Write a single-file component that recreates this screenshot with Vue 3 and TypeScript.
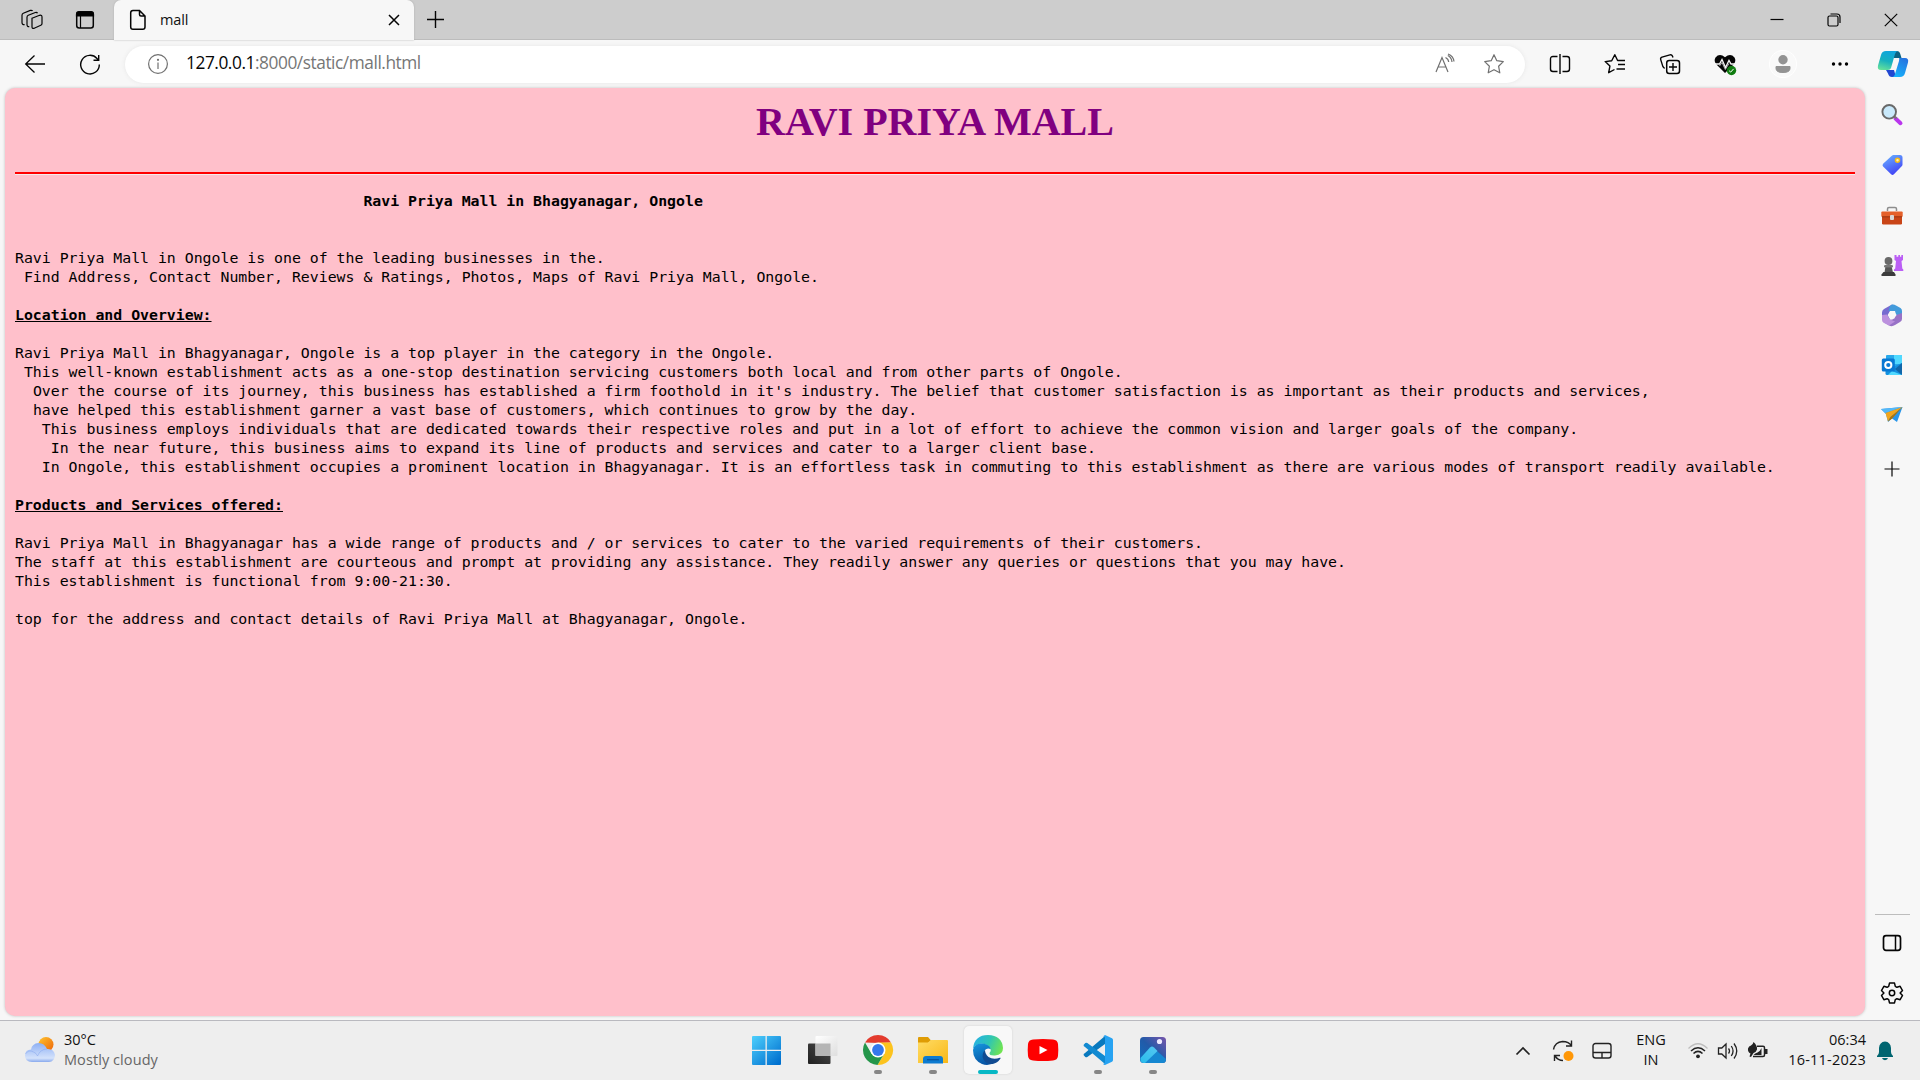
<script setup lang="ts">
interface TextLine {
  indent: number
  text: string
  kind?: 'title' | 'heading'
}

const lines: TextLine[] = [
  { indent: 39, text: 'Ravi Priya Mall in Bhagyanagar, Ongole', kind: 'title' },
  { indent: 0, text: '' },
  { indent: 0, text: '' },
  { indent: 0, text: 'Ravi Priya Mall in Ongole is one of the leading businesses in the.' },
  { indent: 1, text: 'Find Address, Contact Number, Reviews & Ratings, Photos, Maps of Ravi Priya Mall, Ongole.' },
  { indent: 0, text: '' },
  { indent: 0, text: 'Location and Overview:', kind: 'heading' },
  { indent: 0, text: '' },
  { indent: 0, text: 'Ravi Priya Mall in Bhagyanagar, Ongole is a top player in the category in the Ongole.' },
  { indent: 1, text: 'This well-known establishment acts as a one-stop destination servicing customers both local and from other parts of Ongole.' },
  { indent: 2, text: "Over the course of its journey, this business has established a firm foothold in it's industry. The belief that customer satisfaction is as important as their products and services," },
  { indent: 2, text: 'have helped this establishment garner a vast base of customers, which continues to grow by the day.' },
  { indent: 3, text: 'This business employs individuals that are dedicated towards their respective roles and put in a lot of effort to achieve the common vision and larger goals of the company.' },
  { indent: 4, text: 'In the near future, this business aims to expand its line of products and services and cater to a larger client base.' },
  { indent: 3, text: 'In Ongole, this establishment occupies a prominent location in Bhagyanagar. It is an effortless task in commuting to this establishment as there are various modes of transport readily available.' },
  { indent: 0, text: '' },
  { indent: 0, text: 'Products and Services offered:', kind: 'heading' },
  { indent: 0, text: '' },
  { indent: 0, text: 'Ravi Priya Mall in Bhagyanagar has a wide range of products and / or services to cater to the varied requirements of their customers.' },
  { indent: 0, text: 'The staff at this establishment are courteous and prompt at providing any assistance. They readily answer any queries or questions that you may have.' },
  { indent: 0, text: 'This establishment is functional from 9:00-21:30.' },
  { indent: 0, text: '' },
  { indent: 0, text: 'top for the address and contact details of Ravi Priya Mall at Bhagyanagar, Ongole.' },
]
</script>

<template>
  <div class="screen">
    <header class="tabbar">
      <div class="slot workspaces">
        <svg width="24" height="24" viewBox="0 0 24 24" class="ln">
          <path d="M12 10.2 19.6 7.3q2.4-.6 2.4 1.6v6.5q0 1.4-1.2 1.9l-6.6 3q-2.2.6-2.2-1.6z" />
          <path d="M9.3 18.6q-2.3.2-2.3-2V9.3q0-1.4 1.3-2l7-2.800q1.700-.4 2.200.8M4.600 16.600Q2 16.800 2 14.500V7.200q0-1.400 1.300-2l7-2.800q1.700-.4 2.200.6" />
        </svg>
      </div>
      <div class="slot tabactions">
        <svg width="20" height="20" viewBox="0 0 20 20" class="ln">
          <rect x="1.700" y="2.200" width="16.600" height="15.800" rx="2.500" stroke-width="1.500" />
          <path d="M1.500 6V4Q1.500 1.500 4 1.500H16Q18.500 1.500 18.500 4V6Z" fill="#000" />
          <path d="M5.500 6V18" />
        </svg>
      </div>
      <div class="tab">
        <svg width="18" height="22" viewBox="0 0 18 22" class="ln tabfile">
          <path d="M4 1.500h6.500l5.500 5.500v11q0 2.300-2.300 2.300H4q-2.300 0-2.300-2.300V3.800Q1.700 1.500 4 1.500ZM10.500 1.700V5.500q0 1.500 1.500 1.500h4" stroke-width="1.500" />
        </svg>
        <span class="tabtitle">mall</span>
        <svg width="12" height="12" viewBox="0 0 12 12" class="ln tabclose"><path d="m1 1 10 10M11 1 1 11" stroke-width="1.500" /></svg>
      </div>
      <svg width="19" height="19" viewBox="0 0 19 19" class="ln newtab"><path d="M9.500 1v17M1 9.500h17" stroke-width="1.400" /></svg>
      <div class="winctl">
        <svg width="14" height="14" viewBox="0 0 14 14" class="ln"><path d="M.5 6.500h13" /></svg>
        <svg width="14" height="14" viewBox="0 0 14 14" class="ln"><rect x="1" y="3" width="10" height="10" rx="1.500" /><path d="M3.500 1H10q3 0 3 3v6" /></svg>
        <svg width="14" height="14" viewBox="0 0 14 14" class="ln"><path d="m.8.8 12.400 12.400M13.200.8.8 13.200" /></svg>
      </div>
    </header>

    <div class="toolbar">
      <div class="slot nav">
        <svg width="22" height="22" viewBox="0 0 22 22" class="ln"><path d="M10.500 2.500 1.700 11l8.800 8.500M1.700 11H21" stroke-width="1.300" /></svg>
      </div>
      <div class="slot nav">
        <svg width="22" height="22" viewBox="0 0 22 22" class="ln"><path d="M20.300 11.500A9.300 9.300 0 1 1 18 5.500L19.600 7M19.700 2v5.200h-5.200" stroke-width="1.400" /></svg>
      </div>
      <div class="address">
        <svg width="22" height="22" viewBox="0 0 22 22" class="gy info"><circle cx="11" cy="11" r="9.400" /><path d="M11 9.500V16" /><circle cx="11" cy="6.800" r=".5" fill="#707070" /></svg>
        <span class="url"><b>127.0.0.1</b>:8000/static/mall.html</span>
        <svg width="22" height="22" viewBox="0 0 22 22" class="gy read"><path d="M2 19 8 4.500 14 19M4.200 14h7.600M11.500 4.500q3 1.500 3.200 4.500M13.800 2.500q3.800 2 4.200 6.500M14 1q5.500 2 6 7.500" /></svg>
        <svg width="22" height="22" viewBox="0 0 22 22" class="gy"><path d="m11 1.700 2.800 6 6.500.9-4.700 4.600 1.200 6.600-5.800-3.100-5.800 3.100 1.200-6.600L1.700 8.600l6.500-.9Z" stroke-linejoin="round" /></svg>
      </div>
      <div class="slot tool">
        <svg width="22" height="22" viewBox="0 0 22 22" class="ln"><path d="M8.500 3.500H4Q1.500 3.500 1.500 6v10q0 2.500 2.500 2.500h4.500M13.500 3.500H18q2.500 0 2.500 2.500v10q0 2.500-2.500 2.500h-4.500M11 1v20" stroke-width="1.400" /></svg>
      </div>
      <div class="slot tool">
        <svg width="22" height="22" viewBox="0 0 22 22" class="ln"><path d="m10.500 16.500-5.800 3.200 1.200-6.600L1.200 8.600l6.500-.9L10.800 1.700l2.800 5.800H21M14 11.500h7M12.500 16H21" stroke-width="1.400" stroke-linejoin="round" /></svg>
      </div>
      <div class="slot tool">
        <svg width="22" height="22" viewBox="0 0 22 22" class="ln"><rect x="7.700" y="7.500" width="12.800" height="13" rx="2.500" stroke-width="1.500" /><path d="M14 10v8M10 14h8M14 4.500 13.400 3q-.7-1.700-2.500-1.200L3 4.200Q1.200 4.800 1.700 6.600l2.200 7q.5 1.300 1.800 1.600" stroke-width="1.400" /></svg>
      </div>
      <div class="slot tool">
        <svg width="24" height="24" viewBox="0 0 24 24">
          <path d="M12 21 3.500 12.600Q.4 9 2.500 5.500 6.500.7 12 5.200 17.500.7 21.500 5.500q2.100 3.500-1 7.100Z" fill="#050505" />
          <path d="M1 12h5.500l2.500-4.500 3.500 8 3.500-7 2 3.500H23" fill="none" stroke="#f7f7f7" stroke-width="1.300" />
          <path d="m6.500 14 2.500-3.500 3.300 7 3.700-6" fill="none" stroke="#f7f7f7" stroke-width=".7" />
          <circle cx="18.500" cy="18.500" r="4.700" fill="#107c10" /><path d="m16.200 18.800 1.500 1.300 2.900-3.200" fill="none" stroke="#fff" />
        </svg>
      </div>
      <div class="slot profile">
        <svg width="30" height="30" viewBox="0 0 30 30"><circle cx="15" cy="15" r="13.700" fill="#f9f9f9" stroke="#fff" /><circle cx="15" cy="10.800" r="4.700" fill="#939393" /><path d="M8 17.500h14v2q0 4-7 4t-7-4Z" fill="#939393" stroke="#939393" stroke-linejoin="round" /></svg>
      </div>
      <div class="slot more">
        <svg width="18" height="6" viewBox="0 0 18 6"><circle cx="2.500" cy="3" r="1.700" /><circle cx="9" cy="3" r="1.700" /><circle cx="15.500" cy="3" r="1.700" /></svg>
      </div>
      <div class="slot copilot">
        <svg width="32" height="28" viewBox="0 0 32 28">
          <defs>
            <linearGradient id="cpA" x1=".5" y1="0" x2=".2" y2="1"><stop offset="0" stop-color="#0fa5dc" /><stop offset=".5" stop-color="#17b1bf" /><stop offset="1" stop-color="#67e29a" /></linearGradient>
            <linearGradient id="cpB" x1=".8" y1="0" x2=".3" y2="1"><stop offset="0" stop-color="#2672df" /><stop offset="1" stop-color="#18b2fb" /></linearGradient>
          </defs>
          <path d="M14 1h6q2.500 0 3.300 3l1.200 4H17Z" fill="#0b6384" />
          <path d="M9 20h8l2 7h-4q-3 0-4-3.500Z" fill="#2147d1" />
          <path d="M9 1h12q-2 0-3 3l-4 14q-.7 2-3 2H4q-4 0-3-4.500L4 5q1-4 5-4Z" fill="url(#cpA)" />
          <path d="M22 8h6q4 0 3 4.500L28 23q-1 4-5 4h-8q2.300 0 3-3l4-13q.6-3 0-3Z" fill="url(#cpB)" />
        </svg>
      </div>
    </div>

    <div class="middle">
      <main class="page">
        <h1>RAVI PRIYA MALL</h1>
        <hr />
        <pre><div v-for="(line, i) in lines" :key="i" class="line">{{ ' '.repeat(line.indent) }}<span :class="line.kind">{{ line.text }}</span></div></pre>
      </main>
      <aside class="sidebar">
        <svg width="24" height="24" viewBox="0 0 24 24">
          <path d="m15.500 15.500 5 4.700" stroke="#b936ed" stroke-width="4" stroke-linecap="round" /><path d="m14 13 2.500 2.500" stroke="#777" stroke-width="2" />
          <circle cx="9.200" cy="8.800" r="6.800" fill="#c9e9fb" stroke="#696969" stroke-width="1.900" />
        </svg>
        <svg width="24" height="24" viewBox="0 0 24 24">
          <defs><linearGradient id="tg" x1=".2" y1="0" x2=".7" y2="1"><stop offset="0" stop-color="#68b0ff" /><stop offset="1" stop-color="#3f3cf5" /></linearGradient></defs>
          <path d="M13 2h7q2.500 0 2.500 2.500v7q0 1-.8 1.800l-7.800 8q-1.400 1.200-2.800 0l-8-7.800q-1.200-1.400 0-2.800L11.500 3Z" fill="url(#tg)" /><circle cx="17.500" cy="7.200" r="2" fill="#fff2b8" stroke="#f6bb16" stroke-width="1.500" />
        </svg>
        <svg width="24" height="24" viewBox="0 0 24 24">
          <path d="M7.500 8V6q0-1.500 1.500-1.500h6q1.500 0 1.500 1.500v2" fill="none" stroke="#8d8d8d" stroke-width="1.500" />
          <rect x="2" y="11" width="20" height="10.500" rx="1.200" fill="#c94517" /><rect x="1.300" y="8.500" width="21.400" height="5.500" rx="1" fill="#e5602a" /><path d="M2 13.800h20" stroke="#98330f" /><rect x="10" y="12" width="4" height="5" rx="1" fill="#d8d8d8" />
        </svg>
        <svg width="24" height="24" viewBox="0 0 24 24">
          <path d="M14.500 2h2v1.700h1.800V2H20v1.700h1.300V2H23v5l-1.500 1 .8 7.500 1 1V18H14v-1.500l1.200-1L16 8l-1.500-1Z" fill="#bb5ff5" />
          <path d="m5.500 13-1 6.500h8.500l-1.500-6.500Z" fill="#555" /><circle cx="8.500" cy="8" r="3.900" fill="#696969" /><rect x="4" y="12" width="9" height="2.500" rx="1.200" fill="#777" /><path d="M3.500 19h10.500l1.500 2.500V23h-14v-1.500Z" fill="#3c3c3c" />
        </svg>
        <svg width="24" height="24" viewBox="0 0 24 24">
          <path d="M12 1.500 4 6q-2 1-2 3.500V16l8 0-2-4 2-4 6-4Z" fill="#776bd0" /><path d="M12 1.500q2-.5 4 1L20.500 5Q22 6 22 8v7l-6-3.500L15 8H8.500l1.500-5Z" fill="#439bdb" /><path d="M22 10v6q0 2-2 3l-5 3q-3 2-6 .5L3.500 19l4-2 5-.5 4-4.500Z" fill="#9872c7" /><path d="M2 12v5q0 2 2 3l5 2.500 6-4-5-2-3-5Z" fill="#bc91de" /><path d="m10 8.500 4-.2 2.300 3.700-2.200 3.800h-4.200L7.700 12Z" fill="#f7f7f7" />
        </svg>
        <svg width="24" height="24" viewBox="0 0 24 24">
          <rect x="6" y="2" width="16" height="17" rx="1" fill="#28a8ea" /><path d="M14 2h7q1 0 1 1v8h-8Z" fill="#50d9ff" /><path d="M22 10v12H7q-1.500 0-1.500-1.500V17Z" fill="#1490df" /><path d="m15 16 7 6V10Z" fill="#1066a9" /><path d="m12 18 10 4H8Z" fill="#50d9ff" /><rect x="1.800" y="5.500" width="13" height="13" rx="1.500" fill="#0878d3" /><circle cx="8.300" cy="12" r="3.100" fill="none" stroke="#fff" stroke-width="2" />
        </svg>
        <svg width="24" height="24" viewBox="0 0 24 24">
          <path d="M1 6 22.500 4 17 19l-5-3.500-4 3.500-2-8Z" fill="#2795e9" /><path d="M1 6 22.500 4 5.500 10Z" fill="#54b8f8" /><path d="m5.500 10 17-6-12 10L8 18.500Z" fill="#f2a51c" /><path d="m10.500 14 12-10-10.300 11.500L8 18.500Z" fill="#ad740a" />
        </svg>
        <svg width="16" height="16" viewBox="0 0 16 16" class="ln addapp"><path d="M8 .5v15M.5 8h15" /></svg>
        <div class="sidebottom">
          <div class="divider"></div>
          <svg width="22" height="18" viewBox="0 0 22 18" class="ln"><rect x="2.500" y="1.700" width="17" height="14.600" rx="2.500" stroke-width="1.700" /><path d="M14.500 2v14" stroke-width="1.500" /></svg>
          <svg width="24" height="24" viewBox="0 0 24 24" class="ln gear"><path d="m9.500 2.100 5 0 .8 3.300 1.600.9 3.200-1 2.400 4.200-2.400 2.500 2.400 2.500-2.400 4.200-3.200-1-1.600.9-.8 3.300h-5l-.8-3.300-1.600-.9-3.200 1-2.400-4.200L3.900 12 1.500 9.500l2.400-4.200 3.200 1 1.600-.9Z" stroke-width="1.500" stroke-linejoin="round" /><circle cx="12" cy="12" r="2.700" stroke-width="1.500" /></svg>
        </div>
      </aside>
    </div>

    <footer class="taskbar">
      <div class="weather">
        <svg width="32" height="28" viewBox="0 0 32 28">
          <defs>
            <linearGradient id="sun" x1="0" y1="0" x2="1" y2="1"><stop offset="0" stop-color="#ffc52f" /><stop offset="1" stop-color="#ed6208" /></linearGradient>
            <linearGradient id="cl" x1="0" y1="0" x2="0" y2="1"><stop offset="0" stop-color="#8eb0f4" /><stop offset=".8" stop-color="#d4e2fb" /><stop offset="1" stop-color="#88a9ed" /></linearGradient>
          </defs>
          <circle cx="22" cy="9.500" r="7.500" fill="url(#sun)" />
          <path d="M8 27q-7-.5-7-6.500t6-6q1-6 7.500-6.500 6 0 8.500 6 7-.5 8 6-.5 6.500-6 7Z" fill="url(#cl)" /><path d="M1.500 19q3-5 8-2 3 1 4 4 3-7 9.500-7" fill="none" stroke="#7f9feb" opacity=".45" />
        </svg>
        <div class="wtext"><span class="temp">30°C</span><span class="sky">Mostly cloudy</span></div>
      </div>

      <nav class="apps">
        <div class="app">
          <svg width="32" height="32" viewBox="0 0 32 32">
            <defs><linearGradient id="wn" gradientUnits="userSpaceOnUse" x1="0" y1="2" x2="26" y2="30"><stop offset="0" stop-color="#4ed0fd" /><stop offset="1" stop-color="#0070cf" /></linearGradient></defs>
            <path d="M0 3q0-1 1-1h12.500v13.700H0ZM14.800 2h13.200q1 0 1 1v12.700H14.800ZM0 17h13.500v14H1q-1 0-1-1ZM14.800 17H29v13q0 1-1 1H14.800Z" fill="url(#wn)" />
          </svg>
        </div>
        <div class="app">
          <svg width="32" height="32" viewBox="0 0 32 32">
            <defs><linearGradient id="tv" x1="0" y1="0" x2="1" y2="1"><stop offset="0" stop-color="#fff" /><stop offset="1" stop-color="#dedede" /></linearGradient><linearGradient id="td" x1="1" y1="0" x2="0" y2="1"><stop offset="0" stop-color="#4b4b4b" /><stop offset="1" stop-color="#202020" /></linearGradient></defs>
            <rect x="1" y="9.500" width="22.500" height="20.500" rx="1" fill="url(#td)" /><rect x="8.500" y="2" width="22" height="20" rx="1" fill="url(#tv)" /><path d="M8.500 9.500h15V22h-15Z" fill="#b5b5b5" />
          </svg>
        </div>
        <div class="app running">
          <svg width="32" height="32" viewBox="0 0 32 32">
            <path d="M3 8.500A15 15 0 0 1 29 8.500L16 9Z" fill="#e33b2e" /><path d="M29 8.500A15 15 0 0 1 15.500 31L22.500 19.500 16 8.500Z" fill="#fcc31e" /><path d="M3 8.500A15 15 0 0 0 15.500 31L22 20l-12.500-.2Z" fill="#24964a" />
            <circle cx="16" cy="16" r="7.500" fill="#fff" /><circle cx="16" cy="16" r="5.900" fill="#3478ec" />
          </svg>
        </div>
        <div class="app running">
          <svg width="32" height="32" viewBox="0 0 32 32">
            <defs><linearGradient id="fd" x1="0" y1="0" x2="1" y2="1"><stop offset="0" stop-color="#ffdc65" /><stop offset="1" stop-color="#f9b817" /></linearGradient></defs>
            <path d="M1 4q0-1 1-1h9l3 3.500L11 9H1Z" fill="#df9c05" /><path d="M1 8.500h10l3-2.500h16q1 0 1 1v22H1Z" fill="url(#fd)" /><path d="M6 29.500V25q0-3 3-3h14q3 0 3 3v4.500Z" fill="#0d7bd0" /><path d="M10 25.700h12" stroke="#07549d" stroke-width="1.300" />
          </svg>
        </div>
        <div class="app active">
          <svg width="32" height="32" viewBox="0 0 32 32">
            <defs>
              <linearGradient id="e1" x1="0" y1=".3" x2="1" y2=".6"><stop offset="0" stop-color="#26b1e4" /><stop offset=".5" stop-color="#2fc5b4" /><stop offset="1" stop-color="#71e550" /></linearGradient>
              <linearGradient id="e2" x1="0" y1="0" x2=".4" y2="1"><stop offset="0" stop-color="#1698df" /><stop offset="1" stop-color="#0754a4" /></linearGradient>
            </defs>
            <path d="M1 14.500Q2.500 1 16 1q14 .5 15 13 0 7-8 7.500-6 .3-5.500-2.500 2-1.500 1-4Q15 9 7 10q-4 1-6 4.500Z" fill="url(#e1)" />
            <path d="M1 16Q2 10 9 9.500q8 0 9.700 5.500-3.700-1.500-5.700 1-2 4 1.500 8t9.500 4Q17 32.500 10 30 1 26 1 16Z" fill="url(#e2)" />
            <path d="M13 16q-4 4-1.500 9.500 3 5 9 4.500 5-1 8-5.500.5-1-.6-.7Q21 26 16.500 23 13 20 13 16Z" fill="#114b91" />
          </svg>
        </div>
        <div class="app">
          <svg width="32" height="32" viewBox="0 0 32 32"><path d="M6 5.500q10-1 20 0 4.500.3 5 4.500.6 6 0 12-.5 4-5 4.500-10 1-20 0-4.500-.5-5-4.500-.6-6 0-12 .5-4.200 5-4.500Z" fill="#fe0000" /><path d="m12.500 12 8 4-8 4.300Z" fill="#fff" /></svg>
        </div>
        <div class="app running">
          <svg width="32" height="32" viewBox="0 0 32 32"><path d="m23 2-20 17q-2 1-1.300 2.300l1.600 1.700q1 .7 2 0L23 10Z" fill="#0879be" /><path d="m23 30-20-17q-2-1-1.300-2.300L3.300 9q1-.7 2 0L23 22Z" fill="#128ad1" /><path d="m23 1 7 3.300q1 .6 1 1.700v20q0 1.200-1 1.700L23 31q-1.500 0-2-1.500 2 1 2-1.500V4q0-2-2-1.500Z" fill="#27a3f2" /></svg>
        </div>
        <div class="app running">
          <svg width="32" height="32" viewBox="0 0 32 32">
            <defs><linearGradient id="ph" x1="0" y1="1" x2="1" y2="0"><stop offset="0" stop-color="#116ec0" /><stop offset=".5" stop-color="#225aa8" /><stop offset="1" stop-color="#7855ab" /></linearGradient><linearGradient id="pm" x1="1" y1="0" x2="0" y2="1"><stop offset="0" stop-color="#55c7f2" /><stop offset="1" stop-color="#29bceb" /></linearGradient></defs>
            <rect x="3" y="3" width="26" height="26" rx="3.500" fill="url(#ph)" /><path d="m14 13.500 2 0 13 11.500q0 4-3.500 4H7Z" fill="#1687d1" /><path d="M3.500 24 13 13.500q2-2 4 0L20.500 17 8 29H6.500Q3 28.500 3.500 24Z" fill="url(#pm)" /><circle cx="22.500" cy="7.500" r="2.600" fill="#eeeaff" />
          </svg>
        </div>
      </nav>

      <div class="tray">
        <svg width="16" height="10" viewBox="0 0 16 10" class="dk t-up"><path d="m1.500 8.500 6.500-6.500 6.500 6.500" stroke-width="1.700" /></svg>
        <svg width="24" height="24" viewBox="0 0 24 24" class="dk t-sync"><path d="M2.500 10.500Q4 3 11.500 2.500 18 2.500 20.500 7M20.500 1.500V7H15M3.500 22v-5.500H9M4 17q3 4.500 8 4.500" stroke-width="1.400" /><circle cx="17.500" cy="17" r="5" fill="#ff9707" stroke="none" /></svg>
        <svg width="22" height="18" viewBox="0 0 22 18" class="dk t-pad"><rect x="2" y="1.500" width="18" height="14.500" rx="2.500" stroke-width="1.400" /><path d="M2 10.500h18M11 10.500V16" stroke-width="1.400" /></svg>
        <div class="lang"><span>ENG</span><span>IN</span></div>
        <svg width="22" height="18" viewBox="0 0 22 18" class="dk t-wifi"><path d="M1.500 6.500Q11-3 20.500 6.500" stroke="#bdbdbd" /><path d="M4 9q7-6.500 14 0M6.500 11.500q4.500-4.300 9 0" stroke-width="1.500" /><circle cx="11" cy="14.300" r="1.900" fill="#222" stroke="none" /></svg>
        <svg width="22" height="20" viewBox="0 0 22 20" class="dk t-vol"><path d="M1.500 7h3.300L9 3v14l-4.200-4H1.500ZM11.500 7.500q2 2.500 0 5M14.300 5q3.500 5 0 10M17 2.500q5.500 7.500 0 15" stroke-width="1.300" /></svg>
        <svg width="22" height="18" viewBox="0 0 22 18" class="dk t-bat"><path d="M10 4.200h6q1.500 0 1.500 1.500v7.300q0 1.500-1.500 1.500H6" stroke-width="1.500" /><path d="M18 7h2.500v5H18Z" fill="#222" stroke="none" /><path d="M6.500 0q4 3.500 3.500 7.500-1 3-3.500 3.500l-2.500 4-1.500-.5 1-3Q.500 10 1 6.500 1.800 4 4 3.500 6 2.500 6.500 0ZM14.500 6v7H6.500q1.500-2 4-2.500Q13 9.500 14.500 6Z" fill="#222" stroke="none" /></svg>
        <div class="clock"><span class="time">06:34</span><span class="date">16-11-2023</span></div>
        <svg width="18" height="20" viewBox="0 0 18 20" class="t-bell"><path d="M1 15q2-1.500 2-4V7q.5-6 6-6.500 5.500.5 6 6.500v4q0 2.500 2 4v1H1ZM6 17h6q-.5 2-3 2.300-2.500-.3-3-2.300Z" fill="#006570" /></svg>
      </div>
    </footer>
  </div>
</template>

<style>
html, body { margin: 0; background: #f7f7f7; overflow: hidden; }
</style>

<style scoped>
.screen { width: 1920px; height: 1080px; display: flex; flex-direction: column; background: #f7f7f7; font-family: "Open Sans", "Noto Sans", sans-serif; color: #111; overflow: hidden; }
svg { display: block; flex: none; }
.ln { fill: none; stroke: #050505; stroke-width: 1.2; }
.gy { fill: none; stroke: #707070; stroke-width: 1.2; }
.dk { fill: none; stroke: #222; stroke-width: 1.2; }
.slot { display: flex; align-items: center; justify-content: center; flex: none; }
.tabbar { height: 40px; box-sizing: border-box; background: #cdcdcd; border-bottom: 1px solid #bcbcbc; display: flex; align-items: flex-start; flex: none; }
.tabbar .slot { height: 40px; }
.workspaces { width: 53px; margin-left: 5px; }
.tabactions { width: 53px; }
.tab { width: 300px; height: 40px; margin-left: 3px; background: #f7f7f7; border-radius: 7px 7px 0 0; display: flex; align-items: center; box-shadow: 0 0 2px #aaa; }
.tabfile { margin-left: 15px; }
.tabtitle { font-size: 14.5px; margin-left: 13px; line-height: 20px; width: 228px; letter-spacing: -.1px; }
.newtab { margin: 10px 0 0 12px; }
.winctl { margin: 13px 22px 0 auto; display: flex; gap: 43px; }
.toolbar { height: 48px; display: flex; align-items: center; flex: none; }
.nav { width: 55px; }
.nav:first-child { margin-left: 7px; }
.address { margin-left: 8px; width: 1400px; height: 37px; background: #fff; border-radius: 19px; display: flex; align-items: center; flex: none; box-shadow: 0 0 4px #e6e6e6; }
.info { margin-left: 22px; }
.url { margin-left: 17px; flex: 1; font-size: 17.3px; color: #767676; letter-spacing: -.44px; line-height: 34px; margin-bottom: 2px; }
.url b { font-weight: 400; color: #050505; }
.read { margin-right: 27px; }
.address svg:last-child { margin-right: 20px; }
.tool { width: 55px; }
.address + .tool { margin-left: 7px; }
.profile { width: 62px; }
.more { width: 52px; }
.copilot { width: 54px; }
.middle { height: 932px; display: flex; flex: none; }
.page { width: 1860px; height: 928px; margin-left: 5px; box-sizing: border-box; padding: 11px 10px 10px; background: #ffc0cb; border-radius: 10px; box-shadow: 0 0 3px #bbb; flex: none; }
h1 { margin: 0; font: bold 40px/46px "Liberation Serif", serif; color: purple; text-align: center; }
hr { margin: 27px 0 0; border: 0; height: 2px; background: red; border-bottom: 1px solid #f3eeee; }
pre { margin: 17px 0 0; font-family: "DejaVu Sans Mono", monospace; font-size: 14.85px; letter-spacing: -.004px; color: #000; }
.line { height: 19px; line-height: 19px; white-space: pre; }
.title { font-weight: 700; }
.heading { font-weight: 700; text-decoration: underline; }
.sidebar { flex: 1; display: flex; flex-direction: column; align-items: center; padding: 15px 1px 0 0; box-sizing: border-box; gap: 26px; }
.addapp { margin-top: 8px; }
.sidebottom { margin-top: auto; display: flex; flex-direction: column; align-items: center; padding-bottom: 15px; }
.divider { width: 35px; height: 1px; background: #bdbdbd; margin-bottom: 19px; }
.gear { margin-top: 29px; }
.taskbar { height: 60px; box-sizing: border-box; border-top: 1px solid #b9b9bf; background: #eee; display: flex; flex: none; }
.weather { width: 732px; display: flex; padding: 14px 0 0 24px; box-sizing: border-box; }
.wtext { display: flex; flex-direction: column; margin: -5px 0 0 8px; }
.wtext span { height: 20px; line-height: 20px; font-size: 14.5px; }
.sky { color: #666; letter-spacing: .08px; }
.apps { display: flex; gap: 7px; padding-top: 5px; margin-left: 12px; }
.app { width: 48px; height: 48px; display: flex; flex-direction: column; align-items: center; box-sizing: border-box; padding-top: 8px; border-radius: 5px; }
.running::after { content: ""; width: 8px; height: 4px; border-radius: 2px; background: #868686; margin-top: 4px; }
.active { background: #f8f8f8; box-shadow: 0 0 2px #ccc; }
.active::after { content: ""; width: 20px; height: 4px; border-radius: 2px; background: #06b8c5; margin-top: 4px; }
.tray { margin-left: auto; display: flex; align-items: center; height: 59px; }
.t-sync { margin-left: 20px; }
.t-pad { margin-left: 16px; }
.lang { width: 40px; margin-left: 18px; display: flex; flex-direction: column; align-items: center; }
.lang span, .clock span { font-size: 14.5px; line-height: 20px; height: 20px; white-space: nowrap; }
.lang { margin-top: -1px; }
.clock { margin-top: -2px; }
.date { letter-spacing: .22px; }
.t-wifi { margin-left: 16px; }
.t-vol { margin-left: 8px; }
.t-bat { margin-left: 8px; }
.clock { width: 97px; display: flex; flex-direction: column; align-items: flex-end; }
.t-bell { margin: 0 26px 0 10px; }
</style>
